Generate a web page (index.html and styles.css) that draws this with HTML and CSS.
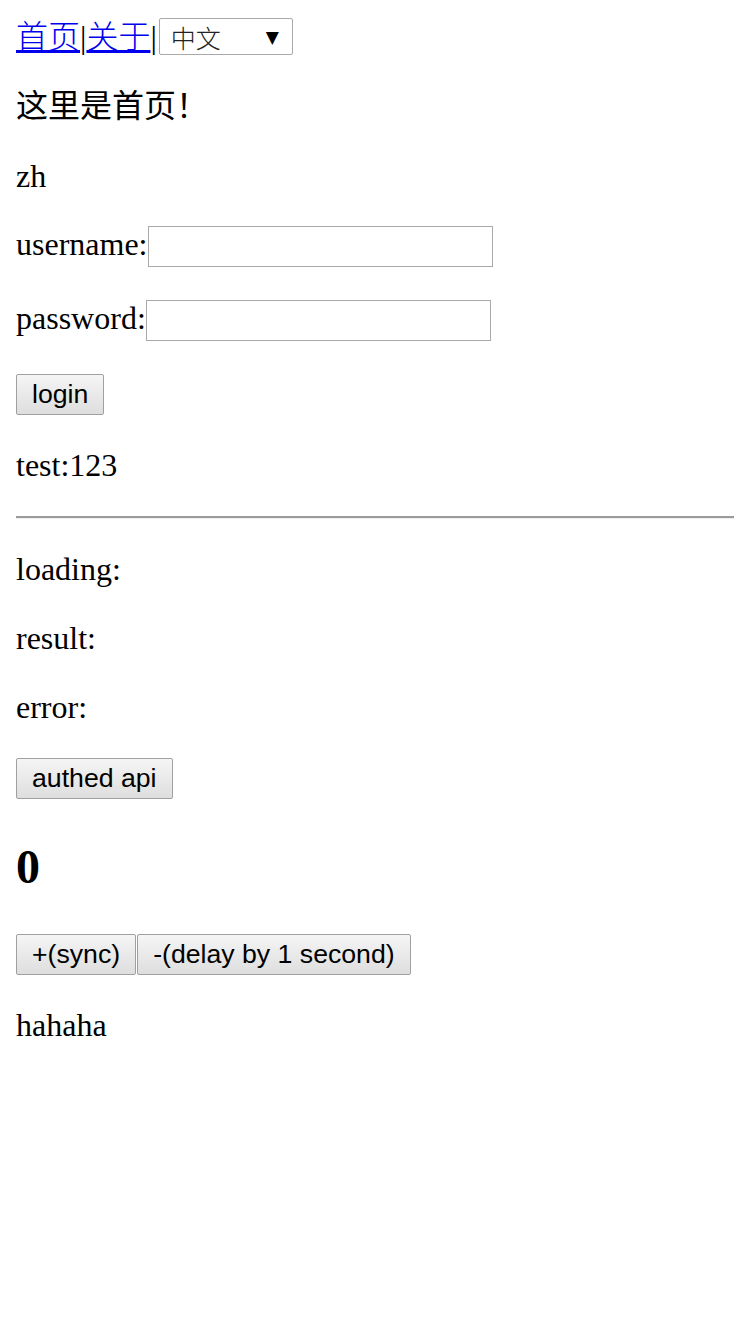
FILE: index.html
```html
<!DOCTYPE html>
<html lang="zh">
<head>
<meta charset="utf-8">
<title>home</title>
<link rel="stylesheet" href="styles.css">
</head>
<body>
<div class="app">
  <div class="nav"><a href="#" class="link">首页</a>|<a href="#" class="link">关于</a>|<span class="select-wrap"><select class="lang"><option>中文</option><option>English</option></select><span class="arrow">▼</span></span></div>
  <div class="home">
    <p class="para para-cjk">这里是首页！</p>
    <p class="para">zh</p>
    <p class="para">username:<input class="field" type="text"></p>
    <p class="para">password:<input class="field" type="password"></p>
    <p class="para"><button class="btn">login</button></p>
    <p class="para">test:123</p>
    <hr class="rule">
    <p class="para">loading:</p>
    <p class="para">result:</p>
    <p class="para">error:</p>
    <p class="para"><button class="btn">authed api</button></p>
    <h2 class="count">0</h2>
    <div class="btn-row"><button class="btn">+(sync)</button><button class="btn">-(delay by 1 second)</button></div>
    <p class="para">hahaha</p>
  </div>
</div>
</body>
</html>
```
FILE: styles.css
```css
html, body {
  background: #fff;
}
body {
  margin: 16px;
  font-family: "Liberation Serif", "Noto Sans CJK SC", serif;
  font-size: 32px;
  line-height: 1.15;
  color: #000;
}
.nav {
  line-height: 1.15;
}
.link {
  color: #0000ee;
  text-decoration: underline;
  font-family: "Noto Sans CJK SC", sans-serif;
  font-weight: 300;
}
.select-wrap {
  position: relative;
  display: inline-block;
  vertical-align: baseline;
}
.lang {
  appearance: none;
  -webkit-appearance: none;
  width: 134px;
  height: 37px;
  margin: 0 0 0 2px;
  padding: 0 0 0 11px;
  border: 1px solid #a9a9a9;
  border-radius: 2px;
  background: #fff;
  color: #222;
  font-family: "Noto Sans CJK SC", sans-serif;
  font-size: 25px;
  font-weight: 300;
  line-height: normal;
}
.arrow {
  position: absolute;
  right: 14px;
  top: 50%;
  transform: translateY(-50%);
  font-family: "DejaVu Sans", sans-serif;
  font-size: 17px;
  line-height: 1;
  color: #000;
  pointer-events: none;
}
.para {
  margin: 32px 0;
}
.para-cjk {
  line-height: 37.8px;
}
.field {
  width: 345px;
  height: 41px;
  box-sizing: border-box;
  margin: 0 0 1px 0;
  padding: 2px 4px;
  border: 1px solid #a9a9a9;
  font-size: 26px;
  vertical-align: baseline;
}
.btn {
  margin: 0;
  padding: 4px 15px;
  border: 1px solid #a0a0a0;
  border-radius: 2px;
  background: linear-gradient(#f5f5f5, #dedede);
  color: #000;
  font-family: "Liberation Sans", Arial, sans-serif;
  font-size: 26.67px;
  line-height: normal;
}
.rule {
  margin: 16px 0 15px;
  height: 0;
  border: 0;
  border-top: 2px solid #9b9b9b;
  border-bottom: 1px solid #eeeeee;
}
.count {
  margin: 40px 0;
  font-size: 48px;
  font-weight: bold;
}
.btn-row {
  display: flex;
  gap: 1px;
}
```
